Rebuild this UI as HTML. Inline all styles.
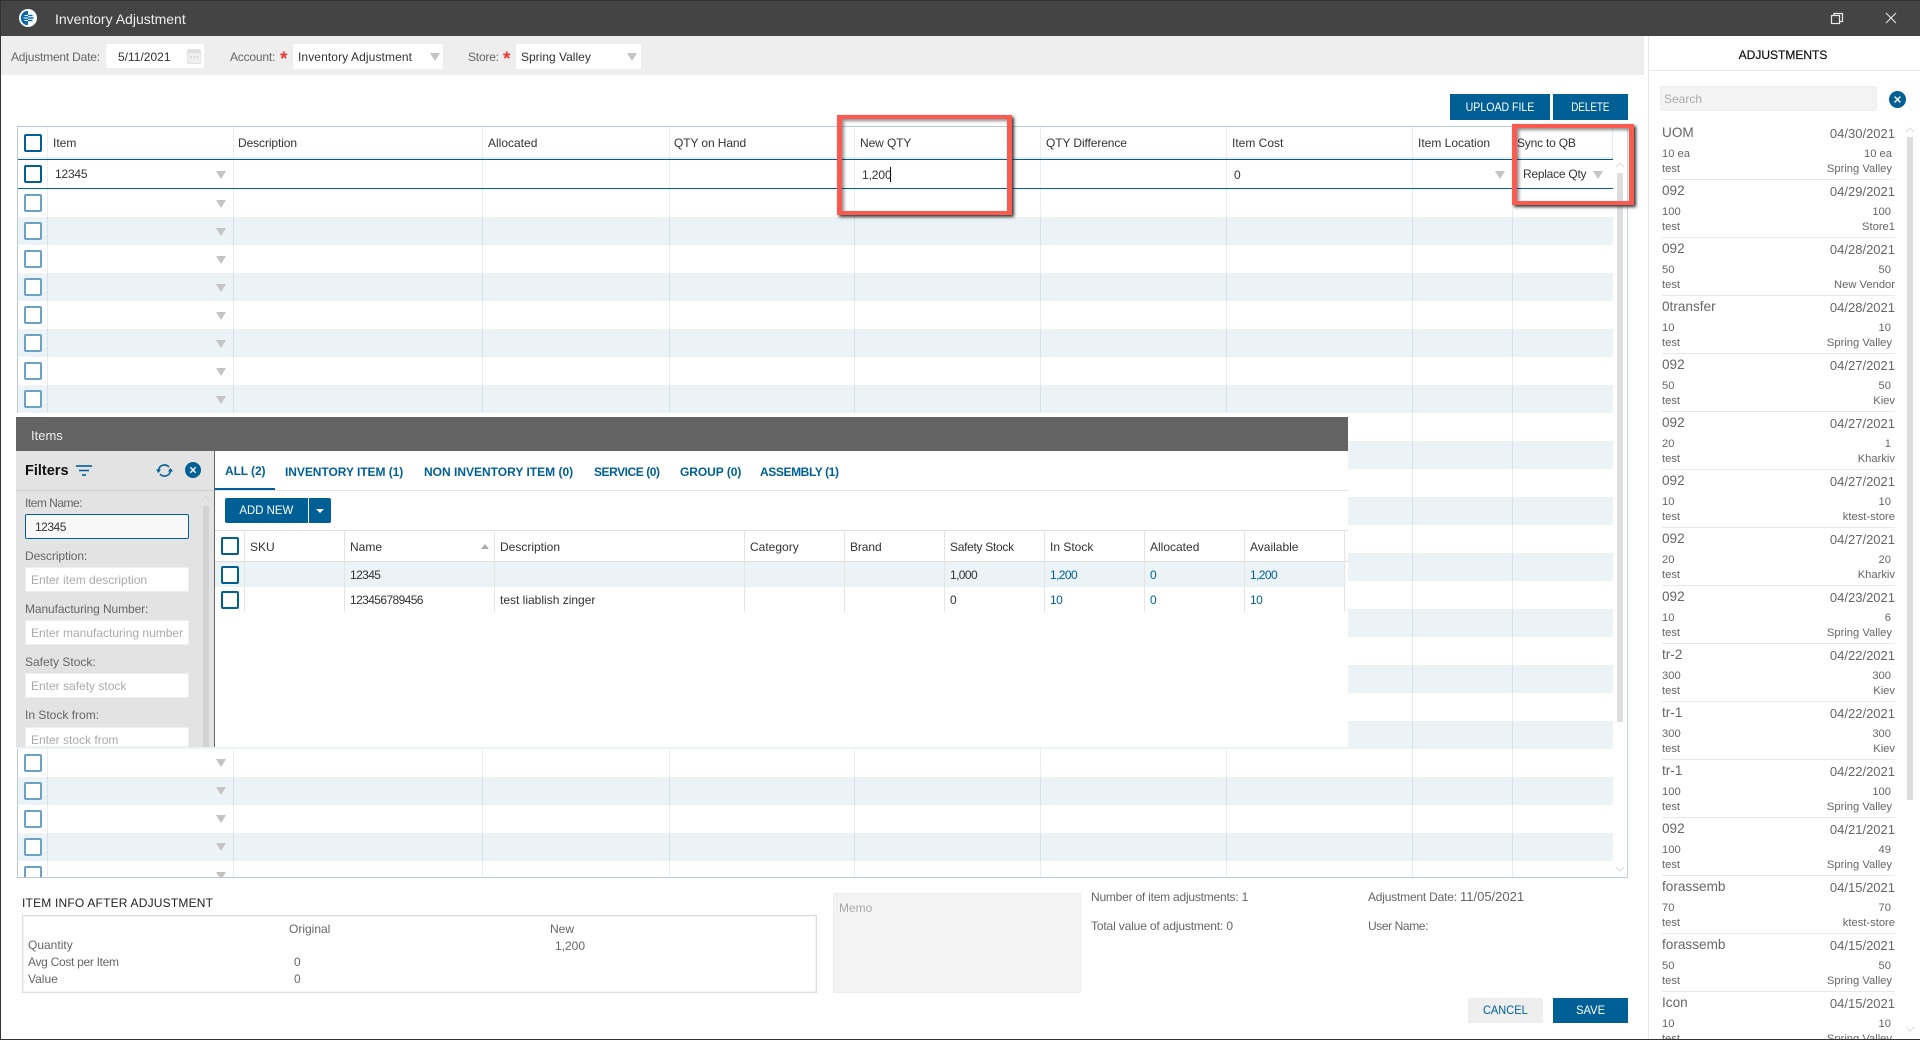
<!DOCTYPE html>
<html><head><meta charset="utf-8"><title>Inventory Adjustment</title>
<style>
html,body{margin:0;padding:0;background:#fff}
#p{position:relative;width:1920px;height:1040px;overflow:hidden;background:#fff;font:12px/16px "Liberation Sans",sans-serif;color:#333}
#p div,#p svg{position:absolute}
.t{white-space:nowrap}
.g{color:#666}
.r{text-align:right}
.l{background:#e9eef1;width:1px;top:127px;height:750px;mix-blend-mode:multiply}
.z{left:18px;width:1595px;height:28px;background:#ebf3f7}
.c{width:14px;height:14px;border:2px solid #6ba3c6;border-radius:2px;left:24px;background:#fff}
.d{border:2px solid #006096}
.a{width:0;height:0;border-left:5px solid transparent;border-right:5px solid transparent;border-top:8px solid #c4c4c4;left:216px}
.b{background:#006096;color:#fff;text-align:center;line-height:26px;height:26px}
.b span{display:inline-block}
.i{left:25px;width:164px;height:25px;background:#fff;border-radius:2px;box-sizing:border-box;box-shadow:0 0 0 1px #eee inset;color:#aaa;padding:5px 6px;white-space:nowrap;overflow:hidden}
.n{letter-spacing:-.6px}
.s{background:#e8e8e8;height:1px;left:1662px;width:233px}
.lt{font-size:13.6px;color:#666;left:1662px;margin-top:1px}
.ld{font-size:13px;color:#666;right:25px}
.ls{font-size:11.2px;color:#666;left:1662px;margin-top:1px}
.rs{font-size:11.2px;color:#666;margin-top:1px}
.h{background:#e4e4e4;width:1px;top:530px;height:82px}
.st{color:#e8392f;font-size:19px;font-weight:bold;top:52px}
</style></head><body><div id="p">

<!-- title bar -->
<div style="left:0;top:0;width:1920px;height:36px;background:#444;border-top:1px solid #333;box-sizing:border-box"></div>
<svg style="left:18px;top:8px" width="20" height="20" viewBox="0 0 20 20"><circle cx="10" cy="10" r="9" fill="#fff"/><path d="M10 2.800a7.200 7.200 0 0 0 0 14.400z" fill="#0a6aa8"/><path d="M10 7.500h4.500M10 10h5.500M10 12.500h4.500" stroke="#0a6aa8" stroke-width="1.400"/><path d="M6.500 7.500H10M5.500 10H10M6.500 12.500H10" stroke="#fff" stroke-width="1.100"/></svg>
<div class="t" style="left:55px;top:11px;font-size:14px;color:#eee">Inventory Adjustment</div>
<svg style="left:1830px;top:12px" width="14" height="13" viewBox="0 0 14 13" fill="none" stroke="#e8e8e8" stroke-width="1.2"><rect x="1.5" y="3.5" width="8" height="8"/><path d="M4 3.2V1.500h8.500v8H9.800"/></svg>
<svg style="left:1885px;top:12px" width="12" height="12" viewBox="0 0 12 12" stroke="#e8e8e8" stroke-width="1.1"><path d="M1 1l10 10M11 1L1 11"/></svg>

<!-- toolbar -->
<div style="left:1px;top:36px;width:1643px;height:39px;background:#eee"></div>
<div class="t g" style="left:11px;top:49px;letter-spacing:-.2px">Adjustment Date:</div>
<div style="left:106px;top:44px;width:98px;height:24px;background:#fff;border-radius:2px"></div>
<div class="t" style="left:118px;top:49px">5/11/2021</div>
<svg style="left:187px;top:48px" width="14" height="16" viewBox="0 0 14 16"><rect x="0.5" y="1.5" width="13" height="14" rx="1.5" fill="#eee" stroke="#e2e2e2"/><rect x="1" y="1.5" width="12" height="3.5" fill="#dedede"/><path d="M3.500 9h1.500M6.500 9H8M9.500 9H11" stroke="#cfcfcf" stroke-width="1.5"/></svg>
<div class="t g" style="left:230px;top:49px;letter-spacing:-.2px">Account:</div>
<div class="t st" style="left:280px">*</div>
<div style="left:293px;top:44px;width:150px;height:25px;background:#fff;border-radius:2px"></div>
<div class="t" style="left:298px;top:49px;letter-spacing:.1px">Inventory Adjustment</div>
<div class="a" style="left:430px;top:53px"></div>
<div class="t g" style="left:468px;top:49px;letter-spacing:-.2px">Store:</div>
<div class="t st" style="left:503px">*</div>
<div style="left:516px;top:44px;width:125px;height:25px;background:#fff;border-radius:2px"></div>
<div class="t" style="left:521px;top:49px">Spring Valley</div>
<div class="a" style="left:627px;top:53px"></div>

<!-- buttons -->
<div class="b" style="left:1450px;top:94px;width:100px"><span style="transform:scaleX(.88)">UPLOAD FILE</span></div>
<div class="b" style="left:1553px;top:94px;width:75px"><span style="transform:scaleX(.82)">DELETE</span></div>

<!-- main grid -->
<div style="left:17px;top:126px;width:1611px;height:752px;box-sizing:border-box;border:1px solid #b9c9d6;border-right-color:#c6d3dd"></div>
<div style="left:18px;top:157px;width:1595px;height:2px;background:#eee"></div>
<div class="z" style="top:217px"></div><div class="z" style="top:273px"></div><div class="z" style="top:329px"></div><div class="z" style="top:385px"></div><div class="z" style="top:441px"></div><div class="z" style="top:497px"></div><div class="z" style="top:553px"></div><div class="z" style="top:609px"></div><div class="z" style="top:665px"></div><div class="z" style="top:721px"></div><div class="z" style="top:777px"></div><div class="z" style="top:833px"></div>
<div class="l" style="left:47px"></div><div class="l" style="left:233px"></div><div class="l" style="left:482px"></div><div class="l" style="left:669px"></div><div class="l" style="left:854px"></div><div class="l" style="left:1040px"></div><div class="l" style="left:1226px"></div><div class="l" style="left:1412px"></div><div class="l" style="left:1512px"></div><div class="l" style="left:1612px;height:32px"></div>
<div style="left:18px;top:159px;width:1595px;height:1px;background:#006096"></div>
<div style="left:18px;top:188px;width:1595px;height:1px;background:#006096"></div>

<div class="c d" style="top:134px"></div>
<div class="t" style="left:53px;top:135px">Item</div>
<div class="t" style="left:238px;top:135px;letter-spacing:-.1px">Description</div>
<div class="t" style="left:488px;top:135px">Allocated</div>
<div class="t" style="left:674px;top:135px;letter-spacing:-.1px">QTY on Hand</div>
<div class="t" style="left:860px;top:135px;letter-spacing:-.1px">New QTY</div>
<div class="t" style="left:1046px;top:135px;letter-spacing:-.1px">QTY Difference</div>
<div class="t" style="left:1232px;top:135px">Item Cost</div>
<div class="t" style="left:1418px;top:135px">Item Location</div>
<div class="t" style="left:1517px;top:135px;letter-spacing:-.2px">Sync to QB</div>

<div class="c d" style="top:165px"></div>
<div class="t" style="left:55px;top:166px;letter-spacing:-.2px">12345</div>
<div class="a" style="top:171px"></div>
<div class="t" style="left:862px;top:167px;letter-spacing:-.1px">1,200</div>
<div style="left:890px;top:167px;width:1px;height:15px;background:#111"></div>
<div class="t" style="left:1234px;top:167px">0</div>
<div class="a" style="left:1495px;top:171px"></div>
<div class="t" style="left:1523px;top:166px;letter-spacing:-.25px">Replace Qty</div>
<div class="a" style="left:1593px;top:171px"></div>

<div class="c" style="top:194px"></div><div class="a" style="top:200px"></div>
<div class="c" style="top:222px"></div><div class="a" style="top:228px"></div>
<div class="c" style="top:250px"></div><div class="a" style="top:256px"></div>
<div class="c" style="top:278px"></div><div class="a" style="top:284px"></div>
<div class="c" style="top:306px"></div><div class="a" style="top:312px"></div>
<div class="c" style="top:334px"></div><div class="a" style="top:340px"></div>
<div class="c" style="top:362px"></div><div class="a" style="top:368px"></div>
<div class="c" style="top:390px"></div><div class="a" style="top:396px"></div>
<div class="c" style="top:754px"></div><div class="a" style="top:759px"></div>
<div class="c" style="top:782px"></div><div class="a" style="top:787px"></div>
<div class="c" style="top:810px"></div><div class="a" style="top:815px"></div>
<div class="c" style="top:838px"></div><div class="a" style="top:843px"></div>
<div style="left:18px;top:866px;width:40px;height:11px;overflow:hidden"><div class="c" style="left:6px;top:0"></div></div>
<div style="left:210px;top:872px;width:20px;height:5px;overflow:hidden"><div class="a" style="left:6px;top:0"></div></div>

<!-- grid scrollbar -->
<div style="left:1617px;top:173px;width:6px;height:549px;background:#ddd"></div>
<svg style="left:1615px;top:162px" width="10" height="7" viewBox="0 0 10 7" fill="none" stroke="#dcdcdc"><path d="M1 5l4-4 4 4"/></svg>
<svg style="left:1615px;top:866px" width="10" height="7" viewBox="0 0 10 7" fill="none" stroke="#dcdcdc"><path d="M1 1l4 4 4-4"/></svg>

<!-- red highlights -->
<div style="left:837px;top:115px;width:175px;height:100px;box-sizing:border-box;border:4px solid #fa5a4f;border-left-width:5px;border-right-width:5px;box-shadow:2px 2px 3px #333,inset 2px 2px 3px rgba(0,0,0,.45)"></div>
<div style="left:1512px;top:124px;width:122px;height:81px;box-sizing:border-box;border:4px solid #fa5a4f;border-left-width:5px;border-right-width:5px;box-shadow:2px 2px 3px #333,inset 2px 2px 3px rgba(0,0,0,.45)"></div>

<!-- items panel -->
<div style="left:16px;top:413px;width:1332px;height:4px;background:#fff"></div>
<div style="left:16px;top:417px;width:1332px;height:34px;background:#636363"></div>
<div class="t" style="left:31px;top:428px;font-size:13px;color:#eee">Items</div>
<div style="left:215px;top:451px;width:1133px;height:296px;background:#fff"></div>
<div style="left:16px;top:747px;width:1332px;height:2px;background:#edf2f5"></div>
<div style="left:16px;top:451px;width:198px;height:296px;background:#e3e3e3;overflow:hidden"></div>
<div style="left:214px;top:451px;width:1px;height:296px;background:#666"></div>
<div style="left:16px;top:490px;width:198px;height:1px;background:#d0d0d0"></div>
<div class="t" style="left:25px;top:463px;font-size:14.500px;font-weight:bold;color:#111">Filters</div>
<svg style="left:76px;top:465px" width="16" height="12" viewBox="0 0 16 12" stroke="#006096"><path d="M0 1h16" stroke-width="1.6"/><path d="M3 5.500h10" stroke-width="1.5"/><path d="M6 10h4" stroke-width="1.6"/></svg>
<svg style="left:156px;top:463px" width="17" height="15" viewBox="0 0 17 15" fill="none" stroke="#006096" stroke-width="1.6"><path d="M2.500 7.500A6 6 0 0 1 13 4"/><path d="M14.500 7.500A6 6 0 0 1 4 11"/><path d="M0 6.500h5L2.500 10z" fill="#006096" stroke="none"/><path d="M12 8.500h5L14.500 5z" fill="#006096" stroke="none"/></svg>
<svg style="left:185px;top:462px" width="16" height="16" viewBox="0 0 16 16"><circle cx="8" cy="8" r="8" fill="#006096"/><path d="M5.300 5.300l5.400 5.400M10.700 5.300l-5.400 5.400" stroke="#fff" stroke-width="1.400"/></svg>
<div class="t g" style="left:25px;top:495px;letter-spacing:-.5px">Item Name:</div>
<div class="i" style="top:514px;border:1px solid #006096;background:#f8f8f8;box-shadow:none;color:#333;padding-left:9px;padding-top:4px;letter-spacing:-.5px">12345</div>
<div class="t g" style="left:25px;top:548px;letter-spacing:-.1px">Description:</div>
<div class="i" style="top:567px">Enter item description</div>
<div class="t g" style="left:25px;top:601px;letter-spacing:-.1px">Manufacturing Number:</div>
<div class="i" style="top:620px">Enter manufacturing number</div>
<div class="t g" style="left:25px;top:654px">Safety Stock:</div>
<div class="i" style="top:673px">Enter safety stock</div>
<div class="t g" style="left:25px;top:707px">In Stock from:</div>
<div class="i" style="top:727px;height:20px;border-radius:2px 2px 0 0">Enter stock from</div>
<div style="left:203px;top:506px;width:6px;height:241px;background:#d3d3d3"></div>
<svg style="left:201px;top:495px" width="10" height="7" viewBox="0 0 10 7" fill="none" stroke="#d6d6d6"><path d="M1 5l4-4 4 4"/></svg>

<!-- tabs -->
<div style="left:215px;top:490px;width:1133px;height:1px;background:#e5e5e5"></div>
<div style="left:215px;top:488px;width:60px;height:2px;background:#006096"></div>
<div class="t" style="left:225px;top:463px;font-weight:bold;color:#006096;letter-spacing:-.1px">ALL (2)</div>
<div class="t" style="left:285px;top:464px;font-weight:bold;color:#006096;letter-spacing:-.05px">INVENTORY ITEM (1)</div>
<div class="t" style="left:424px;top:464px;font-weight:bold;color:#006096;letter-spacing:0">NON INVENTORY ITEM (0)</div>
<div class="t" style="left:594px;top:464px;font-weight:bold;color:#006096;letter-spacing:-.45px">SERVICE (0)</div>
<div class="t" style="left:680px;top:464px;font-weight:bold;color:#006096;letter-spacing:-.05px">GROUP (0)</div>
<div class="t" style="left:760px;top:464px;font-weight:bold;color:#006096;letter-spacing:-.4px">ASSEMBLY (1)</div>

<div class="b" style="left:225px;top:498px;width:83px;height:25px;line-height:25px;border-radius:2px 0 0 2px"><span style="transform:scaleX(.95)">ADD NEW</span></div>
<div class="b" style="left:309px;top:498px;width:22px;height:25px;border-radius:0 2px 2px 0"></div>
<div style="left:316px;top:509px;width:0;height:0;border-left:4px solid transparent;border-right:4px solid transparent;border-top:4px solid #fff"></div>

<!-- items grid -->
<div style="left:215px;top:561px;width:1129px;height:26px;background:#ebf3f7"></div>
<div style="left:215px;top:530px;width:1133px;height:1px;background:#ddd"></div>
<div style="left:215px;top:561px;width:1133px;height:1px;background:#ddd"></div>
<div class="h" style="left:244px"></div><div class="h" style="left:344px"></div><div class="h" style="left:494px"></div><div class="h" style="left:744px"></div><div class="h" style="left:844px"></div><div class="h" style="left:944px"></div><div class="h" style="left:1044px"></div><div class="h" style="left:1144px"></div><div class="h" style="left:1244px"></div><div class="h" style="left:1344px"></div>
<div class="c d" style="left:221px;top:537px"></div>
<div class="c d" style="left:221px;top:566px"></div>
<div class="c d" style="left:221px;top:591px"></div>
<div class="t" style="left:250px;top:539px">SKU</div>
<div class="t" style="left:350px;top:539px">Name</div>
<div style="left:481px;top:544px;width:0;height:0;border-left:4px solid transparent;border-right:4px solid transparent;border-bottom:5px solid #aaa"></div>
<div class="t" style="left:500px;top:539px">Description</div>
<div class="t" style="left:750px;top:539px">Category</div>
<div class="t" style="left:850px;top:539px;letter-spacing:-.1px">Brand</div>
<div class="t" style="left:950px;top:539px;letter-spacing:-.3px">Safety Stock</div>
<div class="t" style="left:1050px;top:539px">In Stock</div>
<div class="t" style="left:1150px;top:539px">Allocated</div>
<div class="t" style="left:1250px;top:539px">Available</div>

<div class="t n" style="left:350px;top:567px">12345</div>
<div class="t n" style="left:950px;top:567px">1,000</div>
<div class="t n" style="left:1050px;top:567px;color:#006096">1,200</div>
<div class="t n" style="left:1150px;top:567px;color:#006096">0</div>
<div class="t n" style="left:1250px;top:567px;color:#006096">1,200</div>
<div class="t n" style="left:350px;top:592px">123456789456</div>
<div class="t" style="left:500px;top:592px">test liablish zinger</div>
<div class="t n" style="left:950px;top:592px">0</div>
<div class="t n" style="left:1050px;top:592px;color:#006096">10</div>
<div class="t n" style="left:1150px;top:592px;color:#006096">0</div>
<div class="t n" style="left:1250px;top:592px;color:#006096">10</div>

<!-- info -->
<div class="t" style="left:22px;top:895px;color:#222;letter-spacing:.2px">ITEM INFO AFTER ADJUSTMENT</div>
<div style="left:22px;top:915px;width:795px;height:78px;box-sizing:border-box;border:1px solid #d8dfe4;box-shadow:inset 0 0 0 1px #f1f3f5"></div>
<div class="t g" style="left:289px;top:921px">Original</div>
<div class="t g" style="left:550px;top:921px">New</div>
<div class="t g" style="left:28px;top:937px">Quantity</div>
<div class="t g" style="left:555px;top:938px">1,200</div>
<div class="t g" style="left:28px;top:954px;letter-spacing:-.3px">Avg Cost per Item</div>
<div class="t g" style="left:294px;top:954px">0</div>
<div class="t g" style="left:28px;top:971px">Value</div>
<div class="t g" style="left:294px;top:971px">0</div>

<div style="left:833px;top:893px;width:248px;height:100px;box-sizing:border-box;background:#f3f3f3;border:1px solid #eee;border-radius:2px"></div>
<div class="t" style="left:839px;top:900px;color:#aaa">Memo</div>
<div class="t g" style="left:1091px;top:889px;letter-spacing:-.22px">Number of item adjustments: 1</div>
<div class="t g" style="left:1091px;top:918px;letter-spacing:-.15px">Total value of adjustment: 0</div>
<div class="t g" style="left:1368px;top:889px;letter-spacing:-.2px">Adjustment Date: <span style="font-size:13px;letter-spacing:0">11/05/2021</span></div>
<div class="t g" style="left:1368px;top:918px;letter-spacing:-.4px">User Name:</div>
<div class="b" style="left:1468px;top:998px;width:75px;height:25px;line-height:25px;background:#eee;color:#006096"><span style="transform:scaleX(.92)">CANCEL</span></div>
<div class="b" style="left:1553px;top:998px;width:75px;height:25px;line-height:25px"><span style="transform:scaleX(.93)">SAVE</span></div>

<!-- right panel -->
<div style="left:1648px;top:36px;width:1px;height:1004px;background:#e8e8e8"></div>
<div style="left:1649px;top:70px;width:271px;height:1px;background:#e8e8e8"></div>
<div class="t" style="left:1738px;top:46px;width:90px;margin-top:1px;text-align:center;color:#111;-webkit-text-stroke:.2px #111">ADJUSTMENTS</div>
<div style="left:1660px;top:86px;width:217px;height:25px;box-sizing:border-box;background:#f3f3f3;border:1px solid #eee;border-radius:2px"></div>
<div class="t" style="left:1664px;top:91px;color:#aaa">Search</div>
<svg style="left:1889px;top:91px" width="17" height="17" viewBox="0 0 16 16"><circle cx="8" cy="8" r="8" fill="#006096"/><path d="M5.300 5.300l5.400 5.400M10.700 5.300l-5.400 5.400" stroke="#fff" stroke-width="1.400"/></svg>
<div style="left:1907px;top:137px;width:6px;height:663px;background:#ddd"></div>
<svg style="left:1905px;top:127px" width="10" height="7" viewBox="0 0 10 7" fill="none" stroke="#dcdcdc"><path d="M1 5l4-4 4 4"/></svg>
<svg style="left:1905px;top:1026px" width="10" height="7" viewBox="0 0 10 7" fill="none" stroke="#dcdcdc"><path d="M1 1l4 4 4-4"/></svg>

<div class="t lt" style="top:124px">UOM</div><div class="t ld" style="top:126px">04/30/2021</div><div class="t ls" style="top:145px">10 ea</div><div class="t rs" style="right:28px;top:145px">10 ea</div><div class="t ls" style="top:160px">test</div><div class="t rs" style="right:28px;top:160px">Spring Valley</div><div class="s" style="top:179px"></div>
<div class="t lt" style="top:182px">092</div><div class="t ld" style="top:184px">04/29/2021</div><div class="t ls" style="top:203px">100</div><div class="t rs" style="right:29px;top:203px">100</div><div class="t ls" style="top:218px">test</div><div class="t rs" style="right:25px;top:218px">Store1</div><div class="s" style="top:237px"></div>
<div class="t lt" style="top:240px">092</div><div class="t ld" style="top:242px">04/28/2021</div><div class="t ls" style="top:261px">50</div><div class="t rs" style="right:29px;top:261px">50</div><div class="t ls" style="top:276px">test</div><div class="t rs" style="right:25px;top:276px">New Vendor</div><div class="s" style="top:295px"></div>
<div class="t lt" style="top:298px">0transfer</div><div class="t ld" style="top:300px">04/28/2021</div><div class="t ls" style="top:319px">10</div><div class="t rs" style="right:29px;top:319px">10</div><div class="t ls" style="top:334px">test</div><div class="t rs" style="right:28px;top:334px">Spring Valley</div><div class="s" style="top:353px"></div>
<div class="t lt" style="top:356px">092</div><div class="t ld" style="top:358px">04/27/2021</div><div class="t ls" style="top:377px">50</div><div class="t rs" style="right:29px;top:377px">50</div><div class="t ls" style="top:392px">test</div><div class="t rs" style="right:25px;top:392px">Kiev</div><div class="s" style="top:411px"></div>
<div class="t lt" style="top:414px">092</div><div class="t ld" style="top:416px">04/27/2021</div><div class="t ls" style="top:435px">20</div><div class="t rs" style="right:29px;top:435px">1</div><div class="t ls" style="top:450px">test</div><div class="t rs" style="right:25px;top:450px">Kharkiv</div><div class="s" style="top:469px"></div>
<div class="t lt" style="top:472px">092</div><div class="t ld" style="top:474px">04/27/2021</div><div class="t ls" style="top:493px">10</div><div class="t rs" style="right:29px;top:493px">10</div><div class="t ls" style="top:508px">test</div><div class="t rs" style="right:25px;top:508px">ktest-store</div><div class="s" style="top:527px"></div>
<div class="t lt" style="top:530px">092</div><div class="t ld" style="top:532px">04/27/2021</div><div class="t ls" style="top:551px">20</div><div class="t rs" style="right:29px;top:551px">20</div><div class="t ls" style="top:566px">test</div><div class="t rs" style="right:25px;top:566px">Kharkiv</div><div class="s" style="top:585px"></div>
<div class="t lt" style="top:588px">092</div><div class="t ld" style="top:590px">04/23/2021</div><div class="t ls" style="top:609px">10</div><div class="t rs" style="right:29px;top:609px">6</div><div class="t ls" style="top:624px">test</div><div class="t rs" style="right:28px;top:624px">Spring Valley</div><div class="s" style="top:643px"></div>
<div class="t lt" style="top:646px">tr-2</div><div class="t ld" style="top:648px">04/22/2021</div><div class="t ls" style="top:667px">300</div><div class="t rs" style="right:29px;top:667px">300</div><div class="t ls" style="top:682px">test</div><div class="t rs" style="right:25px;top:682px">Kiev</div><div class="s" style="top:701px"></div>
<div class="t lt" style="top:704px">tr-1</div><div class="t ld" style="top:706px">04/22/2021</div><div class="t ls" style="top:725px">300</div><div class="t rs" style="right:29px;top:725px">300</div><div class="t ls" style="top:740px">test</div><div class="t rs" style="right:25px;top:740px">Kiev</div><div class="s" style="top:759px"></div>
<div class="t lt" style="top:762px">tr-1</div><div class="t ld" style="top:764px">04/22/2021</div><div class="t ls" style="top:783px">100</div><div class="t rs" style="right:29px;top:783px">100</div><div class="t ls" style="top:798px">test</div><div class="t rs" style="right:28px;top:798px">Spring Valley</div><div class="s" style="top:817px"></div>
<div class="t lt" style="top:820px">092</div><div class="t ld" style="top:822px">04/21/2021</div><div class="t ls" style="top:841px">100</div><div class="t rs" style="right:29px;top:841px">49</div><div class="t ls" style="top:856px">test</div><div class="t rs" style="right:28px;top:856px">Spring Valley</div><div class="s" style="top:875px"></div>
<div class="t lt" style="top:878px">forassemb</div><div class="t ld" style="top:880px">04/15/2021</div><div class="t ls" style="top:899px">70</div><div class="t rs" style="right:29px;top:899px">70</div><div class="t ls" style="top:914px">test</div><div class="t rs" style="right:25px;top:914px">ktest-store</div><div class="s" style="top:933px"></div>
<div class="t lt" style="top:936px">forassemb</div><div class="t ld" style="top:938px">04/15/2021</div><div class="t ls" style="top:957px">50</div><div class="t rs" style="right:29px;top:957px">50</div><div class="t ls" style="top:972px">test</div><div class="t rs" style="right:28px;top:972px">Spring Valley</div><div class="s" style="top:991px"></div>
<div class="t lt" style="top:994px">Icon</div><div class="t ld" style="top:996px">04/15/2021</div><div class="t ls" style="top:1015px">10</div><div class="t rs" style="right:29px;top:1015px">10</div><div class="t ls" style="top:1030px">test</div><div class="t rs" style="right:28px;top:1030px">Spring Valley</div>

<!-- window frame -->
<div style="left:0;top:0;width:1px;height:1040px;background:#333"></div>
<div style="left:0;top:1039px;width:1920px;height:1px;background:#333"></div>
</div></body></html>
